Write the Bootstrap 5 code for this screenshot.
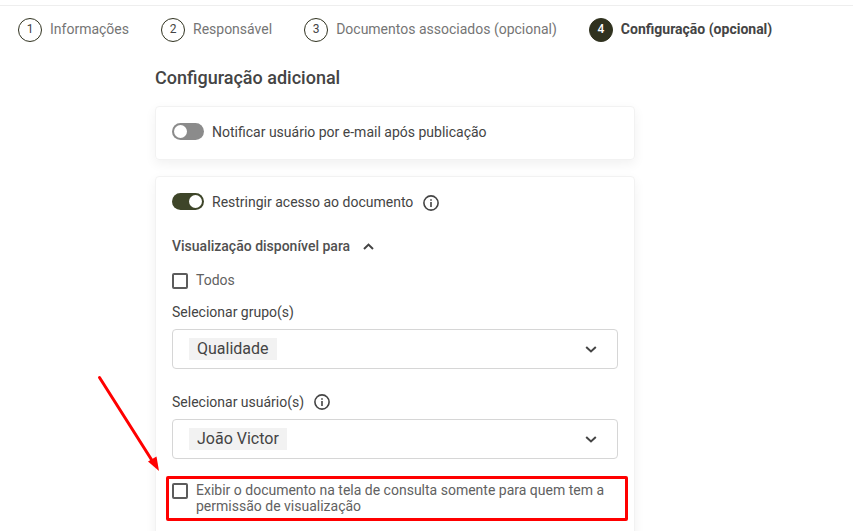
<!DOCTYPE html>
<html lang="pt-BR">
<head>
<meta charset="utf-8">
<meta name="viewport" content="width=device-width, initial-scale=1">
<title>Configuração adicional</title>
<link href="https://cdn.jsdelivr.net/npm/bootstrap@5.3.0/dist/css/bootstrap.min.css" rel="stylesheet">
<style>
  body { font-family: Roboto, "Liberation Sans", sans-serif; font-size: 14px; line-height: 20px; color: #444; background: #fff; padding-top: 5px; }
  .page { border-top: 1px solid #eee; }
  .stepper { padding: 12px 18px; gap: 32px; }
  .stepper a { color: #757575; text-decoration: none; gap: 8px; line-height: 22px; white-space: nowrap; }
  .step-number { width: 24px; height: 24px; flex: none; border: 1px solid #30321f; border-radius: 50%; font-size: 12px; line-height: 20px; text-align: center; color: #444; }
  .stepper a.current { color: #444; font-weight: 700; }
  .current .step-number { background: #30321f; color: #fff; font-weight: 500; }
  .settings { margin: 12px 16px 0 155px; max-width: 480px; }
  .settings h1 { font-size: 18px; line-height: 24px; font-weight: 500; }
  .panel { border: 1px solid #f2f2f2; border-radius: 4px; box-shadow: 0 4px 12px rgba(0,0,0,.06); padding: 16px; }
  .toggle-row { min-height: 20px; line-height: 18px; }
  .toggle { appearance: none; flex: none; width: 32px; height: 17px; margin: 0; padding: 2px; border-radius: 9px; background: #8b8b8b; display: flex; }
  .toggle::before { content: ""; width: 13px; height: 13px; border-radius: 50%; background: #fff; }
  .toggle:checked { background: #3e4529; justify-content: flex-end; }
  .toggle-info { margin: 2px 0 0 2px; }
  .tick { appearance: none; flex: none; width: 16px; height: 16px; margin: 1px 0 0; border: 2px solid #5c5c5c; border-radius: 2px; background: #fff; }
  .tick-label { line-height: 16px; color: #616161; }
  .group-head { margin-top: 23px; font-weight: 500; font-size: 14px; line-height: 20px; color: #505050; gap: 10px; }
  .all-row { margin-top: 16px; }
  .field-row { gap: 10px; margin: 13px 0 7px; }
  .field-row.second { margin-top: 23px; }
  .picker { height: 40px; padding: 0 48px 0 24px; border: 1px solid #d6d6d6; border-radius: 4px; appearance: none; color: #444; font-size: 16px; background: linear-gradient(#f2f2f2, #f2f2f2) 16px 8px / var(--chip) 22px no-repeat #fff; }
  .picker.group { --chip: 88px; }
  .picker.user { --chip: 98px; }
  .picker-arrow { position: absolute; right: 21px; top: 14px; pointer-events: none; }
  .only-row { margin: 23px 0 16px; }
  .highlight { position: absolute; inset: -6px -10px -7px -6px; border: 3px solid #f00; border-radius: 2px; pointer-events: none; }
  .pointer { position: absolute; left: -76px; top: -108px; pointer-events: none; }
  svg { display: block; flex: none; }
</style>
<script src="https://cdn.jsdelivr.net/npm/bootstrap@5.3.0/dist/js/bootstrap.bundle.min.js"></script>
</head>
<body>
<div class="page">
  <nav class="stepper d-flex" aria-label="Etapas">
    <a href="#info" class="d-flex"><span class="step-number">1</span><span>Informações</span></a>
    <a href="#resp" class="d-flex"><span class="step-number">2</span><span>Responsável</span></a>
    <a href="#docs" class="d-flex"><span class="step-number">3</span><span>Documentos associados (opcional)</span></a>
    <a href="#config" class="d-flex current" aria-current="step"><span class="step-number">4</span><span>Configuração (opcional)</span></a>
  </nav>

  <main class="settings" id="config">
    <h1 class="mb-3">Configuração adicional</h1>

    <section class="panel mb-3">
      <div class="toggle-row d-flex align-items-start gap-2">
        <input class="toggle" type="checkbox" role="switch" id="notify">
        <label for="notify">Notificar usuário por e-mail após publicação</label>
      </div>
    </section>

    <section class="panel">
      <div class="toggle-row d-flex align-items-start gap-2">
        <input class="toggle" type="checkbox" role="switch" id="restrict" checked>
        <label for="restrict">Restringir acesso ao documento</label>
        <svg class="toggle-info" width="16" height="16" viewBox="0 0 16 16" aria-hidden="true"><circle cx="8" cy="8" r="7.1" fill="none" stroke="#444" stroke-width="1.6"/><path d="M7.2 4.2h1.6v1.6H7.2zM7.2 7h1.6v5H7.2z" fill="#444"/></svg>
      </div>

      <h2 class="group-head d-flex align-items-center mb-0">Visualização disponível para
        <button type="button" class="btn p-0 border-0" aria-label="Recolher"><svg width="16" height="16" viewBox="0 0 16 16"><path d="M4 11 8.500 6.600 13 11" fill="none" stroke="#444" stroke-width="2"/></svg></button>
      </h2>

      <div class="all-row d-flex gap-2">
        <input class="tick" type="checkbox" id="all">
        <label class="tick-label" for="all">Todos</label>
      </div>

      <div class="field-row d-flex"><label for="groups">Selecionar grupo(s)</label></div>
      <div class="position-relative">
        <select class="picker group w-100 d-block" id="groups"><option>Qualidade</option></select>
        <svg class="picker-arrow" width="12" height="12" viewBox="0 0 12 12" aria-hidden="true"><path d="M1.200 4 6 8.400 10.800 4" fill="none" stroke="#444" stroke-width="2"/></svg>
      </div>

      <div class="field-row second d-flex align-items-center"><label for="users">Selecionar usuário(s)</label>
        <svg width="16" height="16" viewBox="0 0 16 16" aria-hidden="true"><circle cx="8" cy="8" r="7.1" fill="none" stroke="#444" stroke-width="1.6"/><path d="M7.2 4.2h1.6v1.6H7.2zM7.2 7h1.6v5H7.2z" fill="#444"/></svg>
      </div>
      <div class="position-relative">
        <select class="picker user w-100 d-block" id="users"><option>João Victor</option></select>
        <svg class="picker-arrow" width="12" height="12" viewBox="0 0 12 12" aria-hidden="true"><path d="M1.200 4 6 8.400 10.800 4" fill="none" stroke="#444" stroke-width="2"/></svg>
      </div>

      <div class="only-row d-flex gap-2 position-relative">
        <input class="tick" type="checkbox" id="only">
        <label class="tick-label" for="only">Exibir o documento na tela de consulta somente para quem tem a permissão de visualização</label>
        <span class="highlight"></span>
        <svg class="pointer" width="66" height="100" viewBox="0 0 66 100" aria-hidden="true"><path d="M3.500 3.500 57 88" stroke="#f00" stroke-width="3" stroke-linecap="round"/><path d="M63 97 52 87.500 60.500 82.500z" fill="#f00"/></svg>
      </div>
    </section>
  </main>
</div>
</body>
</html>
